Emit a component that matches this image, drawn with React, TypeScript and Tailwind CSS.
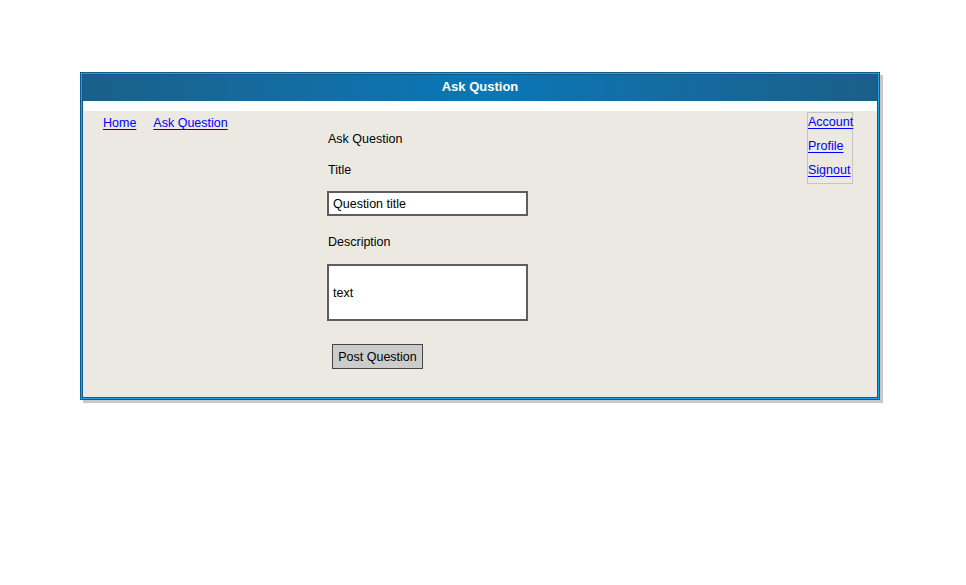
const font = { fontFamily: '"Liberation Sans", Arial, sans-serif' };

function NavLink({ children }: { children: React.ReactNode }) {
  return (
    <a href="#" className="text-[12.5px] leading-4 text-[#0000ff] underline underline-offset-2">
      {children}
    </a>
  );
}

export default function App() {
  return (
    <div className="min-h-[585px] bg-white pl-[80px] pt-[72px]" style={font}>
      {/* Window */}
      <div className="w-[800px] border border-[#0e5c94] shadow-[3px_3px_0_#c8c8c8]">
        <div className="border border-[#1ea0ec]">
          <div className="border border-[#0e5c94]">
            <div className="flex h-[26px] items-center justify-center bg-gradient-to-r from-[#1a6088] via-[#0877b8] to-[#1a5f88] pb-[2px] text-[13px] font-bold text-white">
              Ask Qustion
            </div>
            <div className="h-[10px] bg-white" />

            <div className="flex h-[286px] bg-[#ece9e3] text-[12.5px] text-black">
              {/* Left nav */}
              <div className="flex w-[244px] gap-[17px] pl-[20px] pt-[4px]">
                <NavLink>Home</NavLink>
                <NavLink>Ask Question</NavLink>
              </div>

              {/* Form */}
              <div className="flex w-[201px] flex-col">
                <div className="ml-px mt-[20px] leading-4">Ask Question</div>
                <div className="ml-px mt-[15px] leading-4">Title</div>
                <div className="mt-[13px] flex h-[25px] items-center border-2 border-[#5e5e5e] bg-white pl-1 leading-4">
                  Question title
                </div>
                <div className="ml-px mt-[18px] leading-4">Description</div>
                <div className="mt-[14px] flex h-[57px] items-center border-2 border-[#5e5e5e] bg-white pl-1 leading-4">
                  text
                </div>
                <button className="ml-[5px] mt-[23px] h-[25px] w-[91px] border-[1.5px] border-[#444] bg-[#cccccc] text-[12.5px] leading-4 text-black">
                  Post Question
                </button>
              </div>

              <div className="flex-1" />

              {/* Right menu */}
              <div className="mr-[24px] mt-px flex h-[72px] w-[46px] flex-col gap-2 border border-[#c4c4c4] pt-[1px]">
                <NavLink>Account</NavLink>
                <NavLink>Profile</NavLink>
                <NavLink>Signout</NavLink>
              </div>
            </div>
          </div>
        </div>
      </div>
    </div>
  );
}
